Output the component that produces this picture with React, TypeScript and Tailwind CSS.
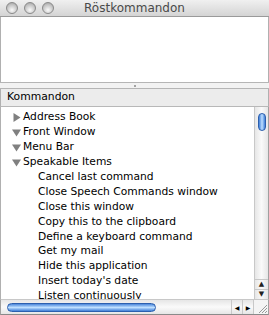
const topItems = [
  { label: 'Address Book', open: false },
  { label: 'Front Window', open: true },
  { label: 'Menu Bar', open: true },
  { label: 'Speakable Items', open: true },
]

const children = [
  'Cancel last command',
  'Close Speech Commands window',
  'Close this window',
  'Copy this to the clipboard',
  'Define a keyboard command',
  'Get my mail',
  'Hide this application',
  "Insert today's date",
  'Listen continuously',
]

const Light = () => (
  <div className="w-[12px] h-[12px] rounded-full border border-[#8a8a8a] bg-[radial-gradient(circle_at_50%_70%,#fafafa,#c4c4c4_60%,#9a9a9a)]" />
)

const Triangle = ({ open }: { open: boolean }) => (
  <svg width="9" height="9" viewBox="0 0 9 9" className="shrink-0">
    {open ? <polygon points="0,1.5 9,1.5 4.5,8.5" fill="#808080" /> : <polygon points="1.5,0 8.5,4.5 1.5,9" fill="#808080" />}
  </svg>
)

const App = () => {
  return (
    <div className="w-[269px] h-[315px] flex flex-col bg-white overflow-hidden text-black" style={{ fontFamily: '"DejaVu Sans", sans-serif' }}>
      {/* title bar */}
      <div className="h-[17px] shrink-0 relative flex items-center bg-gradient-to-b from-[#f0f0f0] to-[#d4d4d4] border-b border-[#9a9a9a]">
        <div className="flex gap-[6px] pl-[6px]">
          <Light />
          <Light />
          <Light />
        </div>
        <div className="absolute inset-0 flex items-center justify-center text-[12px] text-[#4a4a4a]">Röstkommandon</div>
      </div>

      {/* message area */}
      <div className="h-[65px] shrink-0 bg-white border-x border-[#b0b0b0]" />

      {/* splitter */}
      <div className="h-[7px] shrink-0 bg-[#f2f2f2] border-y border-[#b5b5b5] flex items-center justify-center">
        <div className="w-[2px] h-[2px] rounded-full bg-[#888]" />
      </div>

      {/* header */}
      <div className="h-[18px] shrink-0 bg-[#ececec] border-b border-[#b8b8b8] border-x border-x-[#b0b0b0] flex items-center pl-[6px] text-[10.8px]">
        Kommandon
      </div>

      {/* list + vertical scroller */}
      <div className="flex-1 flex min-h-0 border-l border-[#b0b0b0]">
        <div className="flex-1 overflow-hidden pt-[3px] text-[10.7px]">
          {topItems.map((it) => (
            <div key={it.label} className="h-[14.9px] flex items-center gap-[2px] pl-[11px]">
              <Triangle open={it.open} />
              <span>{it.label}</span>
            </div>
          ))}
          {children.map((c) => (
            <div key={c} className="h-[14.9px] flex items-center pl-[37px]">
              {c}
            </div>
          ))}
        </div>
        <div className="w-[15px] shrink-0 border-l border-[#c8c8c8] bg-gradient-to-r from-[#e6e6e6] via-[#fafafa] to-[#e6e6e6] flex flex-col items-center border-r border-r-[#a0a0a0]">
          <div className="mt-[6px] w-[8px] h-[18px] rounded-full bg-gradient-to-r from-[#3f7ed6] via-[#bfe0ff] to-[#3f7ed6] border border-[#2c5fae]" />
          <div className="flex-1" />
          <div className="h-[10px] w-full flex items-center justify-center border-t border-[#c8c8c8] text-[7px] text-[#222]">▲</div>
          <div className="h-[10px] w-full flex items-center justify-center border-t border-[#c8c8c8] text-[7px] text-[#222]">▼</div>
        </div>
      </div>

      {/* horizontal scroller */}
      <div className="h-[16px] shrink-0 flex border-t border-[#c8c8c8] border-b border-b-[#8a8a8a] border-x border-x-[#a0a0a0]">
        <div className="flex-1 flex items-center bg-gradient-to-b from-[#e6e6e6] via-[#fafafa] to-[#e6e6e6]">
          <div className="ml-[6px] w-[149px] h-[9px] rounded-full bg-gradient-to-b from-[#4a86da] via-[#bfe0ff] to-[#3f7ed6] border border-[#2c5fae]" />
          <div className="flex-1" />
          <div className="w-[11px] h-full flex items-center justify-center border-l border-[#c8c8c8] text-[6px]">◀</div>
          <div className="w-[11px] h-full flex items-center justify-center border-l border-[#c8c8c8] text-[6px]">▶</div>
        </div>
        <div className="w-[15px] border-l border-[#c8c8c8] bg-[#f4f4f4] flex items-end justify-end">
          <svg width="11" height="11" viewBox="0 0 11 11">
            <line x1="10" y1="2" x2="2" y2="10" stroke="#999" />
            <line x1="10" y1="5" x2="5" y2="10" stroke="#999" />
            <line x1="10" y1="8" x2="8" y2="10" stroke="#999" />
          </svg>
        </div>
      </div>
    </div>
  )
}

export default App
